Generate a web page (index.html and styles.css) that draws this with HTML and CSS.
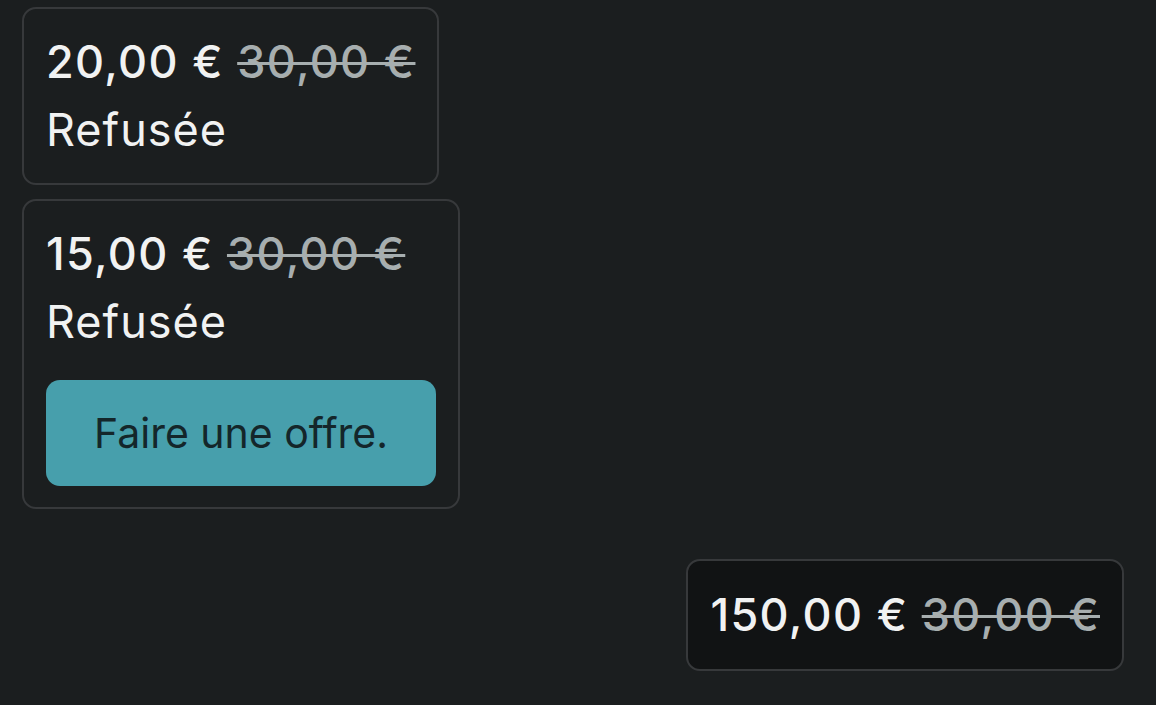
FILE: index.html
```html
<!DOCTYPE html>
<html lang="fr">
<head>
<meta charset="utf-8">
<title>Offres</title>
<link rel="stylesheet" href="styles.css">
</head>
<body>
<main class="thread">
  <div class="bubble bubble-first">
    <div class="price"><span class="amount">20,00 €</span> <s class="old">30,00 €</s></div>
    <div class="status">Refusée</div>
  </div>
  <div class="bubble bubble-action">
    <div class="price"><span class="amount">15,00 €</span> <s class="old">30,00 €</s></div>
    <div class="status">Refusée</div>
    <button class="offer-btn">Faire une offre.</button>
  </div>
  <div class="bubble bubble-mine">
    <div class="price"><span class="amount">150,00 €</span> <s class="old">30,00 €</s></div>
  </div>
</main>
</body>
</html>
```
FILE: styles.css
```css
html, body {
  margin: 0;
  padding: 0;
  background: #1b1e1f;
}
body {
  font-family: "Inter", "Noto Sans", sans-serif;
  color: #f1f2f2;
}
.thread {
  display: flex;
  flex-direction: column;
  align-items: flex-start;
  padding: 7px 32px 0 22px;
}
.bubble {
  border: 2px solid #37393b;
  border-radius: 14px;
  padding: 19px 22px;
  background: #1b1e1f;
  display: flex;
  flex-direction: column;
  align-items: stretch;
  margin-bottom: 14px;
}
.bubble-first {
  padding-bottom: 20px;
}
.bubble-action {
  padding-bottom: 21px;
}
.bubble-mine {
  align-self: flex-end;
  background: #111314;
  margin-top: 36px;
  padding-top: 20px;
  padding-bottom: 20px;
}
.price {
  font-size: 45px;
  line-height: 67.5px;
  font-weight: 500;
  letter-spacing: 1.35px;
  white-space: nowrap;
}
.old {
  color: #a7aeaf;
  font-weight: 500;
  text-decoration-thickness: 3px;
}
.status {
  font-size: 45px;
  line-height: 67.5px;
  font-weight: 400;
  letter-spacing: 1px;
}
.offer-btn {
  margin-top: 25px;
  height: 106px;
  border: none;
  border-radius: 14px;
  background: #479fac;
  color: #14262a;
  font-family: inherit;
  font-size: 41px;
  font-weight: 400;
  padding: 0 48px;
}
```
